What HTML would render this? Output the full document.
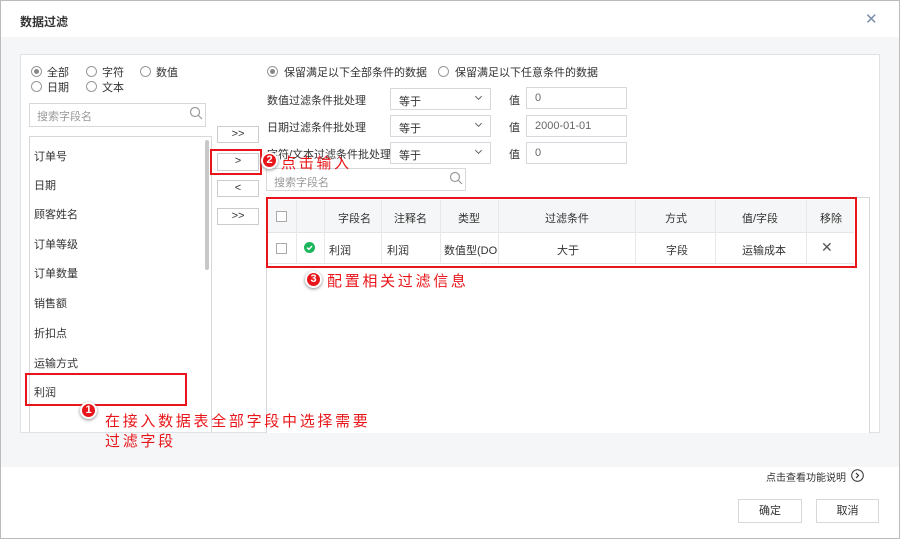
<!DOCTYPE html>
<html><head><meta charset="utf-8"><style>
*{box-sizing:border-box;margin:0;padding:0}
body{width:900px;height:539px;position:relative;overflow:hidden;background:#fff;font-family:"Liberation Sans","Noto Sans CJK SC",sans-serif;font-size:11px;color:#333}
.a{position:absolute}
.t{position:absolute;white-space:nowrap}
.radio{position:absolute;width:11px;height:11px;border:1px solid #999;border-radius:50%;background:#fff}
.radio.on::after{content:"";position:absolute;left:2px;top:2px;width:5px;height:5px;border-radius:50%;background:#888}
.box{position:absolute;border:1px solid #d6d8dc;background:#fff}
.btn{position:absolute;border:1px solid #ccc;background:#fff;text-align:center;font-size:11px;line-height:15px;color:#333}
.red{position:absolute;border:2px solid #e8161a}
.rc{position:absolute;width:17px;height:17px;border-radius:50%;background:#e8161a;border:2px solid #fff;box-shadow:0 1px 3px #888;color:#fff;font-size:11px;font-weight:bold;text-align:center;line-height:13px}
.rt{position:absolute;color:#e8161a;font-size:15px;letter-spacing:2.7px;white-space:nowrap}
.chev{position:absolute;right:9px;top:5px;width:5px;height:5px;border-right:1px solid #666;border-bottom:1px solid #666;transform:rotate(45deg)}
.cb{position:absolute;width:11px;height:11px;border:1px solid #aaa;background:#fff}
</style></head><body>
<div class="a" style="left:0;top:0;width:900px;height:539px;border:1px solid #bbb"></div>
<div class="t" style="left:20px;top:13px;font-size:12px;font-weight:bold;color:#333">数据过滤</div>
<div class="t" style="left:865px;top:10px;font-size:15px;color:#7a8ea8">✕</div>
<div class="a" style="left:1px;top:37px;width:898px;height:430px;background:#f5f6f8"></div>
<div class="a" style="left:20px;top:54px;width:860px;height:379px;background:#fff;border:1px solid #e0e2e5"></div>

<div class="radio on" style="left:31px;top:66px"></div><div class="t" style="left:47px;top:64px">全部</div>
<div class="radio" style="left:86px;top:66px"></div><div class="t" style="left:102px;top:64px">字符</div>
<div class="radio" style="left:140px;top:66px"></div><div class="t" style="left:156px;top:64px">数值</div>
<div class="radio" style="left:31px;top:81px"></div><div class="t" style="left:47px;top:79px">日期</div>
<div class="radio" style="left:86px;top:81px"></div><div class="t" style="left:102px;top:79px">文本</div>

<div class="box" style="left:29px;top:103px;width:177px;height:24px"></div>
<div class="t" style="left:37px;top:108px;color:#999">搜索字段名</div>
<svg class="a" style="left:189px;top:106px" width="14" height="14"><circle cx="6" cy="6" r="4.5" fill="none" stroke="#999" stroke-width="1.2"/><path d="M9.5 9.5L13 13" stroke="#999" stroke-width="1.2"/></svg>

<div class="box" style="left:29px;top:136px;width:183px;height:296px;border-bottom:none"></div>
<div class="a" style="left:205px;top:140px;width:4px;height:130px;background:#c8c8c8;border-radius:2px"></div>
<div class="t" style="left:34px;top:148px">订单号</div>
<div class="t" style="left:34px;top:177px">日期</div>
<div class="t" style="left:34px;top:206px">顾客姓名</div>
<div class="t" style="left:34px;top:236px">订单等级</div>
<div class="t" style="left:34px;top:265px">订单数量</div>
<div class="t" style="left:34px;top:295px">销售额</div>
<div class="t" style="left:34px;top:325px">折扣点</div>
<div class="t" style="left:34px;top:355px">运输方式</div>
<div class="t" style="left:34px;top:384px">利润</div>
<div class="red" style="left:25px;top:373px;width:162px;height:33px"></div>

<div class="btn" style="left:217px;top:126px;width:42px;height:17px">&gt;&gt;</div>
<div class="btn" style="left:217px;top:153px;width:42px;height:18px">&gt;</div>
<div class="red" style="left:210px;top:149px;width:52px;height:26px"></div>
<div class="btn" style="left:217px;top:180px;width:42px;height:17px">&lt;</div>
<div class="btn" style="left:217px;top:208px;width:42px;height:17px">&gt;&gt;</div>

<div class="radio on" style="left:267px;top:66px"></div><div class="t" style="left:284px;top:64px">保留满足以下全部条件的数据</div>
<div class="radio" style="left:438px;top:66px"></div><div class="t" style="left:455px;top:64px">保留满足以下任意条件的数据</div>

<div class="t" style="left:267px;top:92px">数值过滤条件批处理</div>
<div class="t" style="left:267px;top:119px">日期过滤条件批处理</div>
<div class="t" style="left:267px;top:146px">字符/文本过滤条件批处理</div>
<div class="box" style="left:390px;top:88px;width:101px;height:22px"><span class="t" style="left:8px;top:4px">等于</span><div class="chev"></div></div>
<div class="box" style="left:390px;top:115px;width:101px;height:22px"><span class="t" style="left:8px;top:4px">等于</span><div class="chev"></div></div>
<div class="box" style="left:390px;top:142px;width:101px;height:22px"><span class="t" style="left:8px;top:4px">等于</span><div class="chev"></div></div>
<div class="t" style="left:509px;top:92px">值</div><div class="t" style="left:509px;top:119px">值</div><div class="t" style="left:509px;top:146px">值</div>
<div class="box" style="left:526px;top:87px;width:101px;height:22px"><span class="t" style="left:8px;top:4px;color:#666">0</span></div>
<div class="box" style="left:526px;top:115px;width:101px;height:22px"><span class="t" style="left:8px;top:4px;color:#666">2000-01-01</span></div>
<div class="box" style="left:526px;top:142px;width:101px;height:22px"><span class="t" style="left:8px;top:4px;color:#666">0</span></div>

<div class="box" style="left:266px;top:168px;width:200px;height:23px"></div>
<div class="t" style="left:274px;top:174px;color:#999">搜索字段名</div>
<svg class="a" style="left:449px;top:171px" width="14" height="14"><circle cx="6" cy="6" r="4.5" fill="none" stroke="#999" stroke-width="1.2"/><path d="M9.5 9.5L13 13" stroke="#999" stroke-width="1.2"/></svg>

<div class="box" style="left:266px;top:197px;width:604px;height:236px;border-bottom:none"></div>
<div class="a" style="left:268px;top:200px;width:586px;height:33px;background:#f5f6f7;border-bottom:1px solid #e5e5e5"></div>
<div class="a" style="left:268px;top:263px;width:586px;height:1px;background:#e5e5e5"></div>
<div class="a" style="left:296px;top:200px;width:1px;height:63px;background:#e8e8e8"></div>
<div class="a" style="left:324px;top:200px;width:1px;height:63px;background:#e8e8e8"></div>
<div class="a" style="left:381px;top:200px;width:1px;height:63px;background:#e8e8e8"></div>
<div class="a" style="left:440px;top:200px;width:1px;height:63px;background:#e8e8e8"></div>
<div class="a" style="left:498px;top:200px;width:1px;height:63px;background:#e8e8e8"></div>
<div class="a" style="left:635px;top:200px;width:1px;height:63px;background:#e8e8e8"></div>
<div class="a" style="left:715px;top:200px;width:1px;height:63px;background:#e8e8e8"></div>
<div class="a" style="left:806px;top:200px;width:1px;height:63px;background:#e8e8e8"></div>
<div class="cb" style="left:276px;top:211px"></div>
<div class="t" style="left:338px;top:210px">字段名</div>
<div class="t" style="left:394px;top:210px">注释名</div>
<div class="t" style="left:458px;top:210px">类型</div>
<div class="t" style="left:545px;top:210px">过滤条件</div>
<div class="t" style="left:665px;top:210px">方式</div>
<div class="t" style="left:742px;top:210px">值/字段</div>
<div class="t" style="left:820px;top:210px">移除</div>
<div class="cb" style="left:276px;top:243px"></div>
<svg class="a" style="left:304px;top:242px" width="11" height="11"><circle cx="5.5" cy="5.5" r="5.5" fill="#1bb55c"/><path d="M3 5.6L4.9 7.4L8 4" stroke="#fff" stroke-width="1.4" fill="none"/></svg>
<div class="t" style="left:329px;top:242px">利润</div>
<div class="t" style="left:387px;top:242px">利润</div>
<div class="a" style="left:444px;top:242px;width:54px;overflow:hidden;white-space:nowrap">数值型(DOUBLE)</div>
<div class="t" style="left:557px;top:242px">大于</div>
<div class="t" style="left:666px;top:242px">字段</div>
<div class="t" style="left:742px;top:242px">运输成本</div>
<div class="t" style="left:821px;top:239px;font-size:14px;color:#555">✕</div>
<div class="red" style="left:266px;top:197px;width:591px;height:71px"></div>

<div class="rc" style="left:261px;top:152px">2</div>
<div class="rt" style="left:281px;top:152px">点击输入</div>
<div class="rc" style="left:305px;top:271px">3</div>
<div class="rt" style="left:327px;top:270px">配置相关过滤信息</div>
<div class="rc" style="left:80px;top:402px">1</div>
<div class="rt" style="left:105px;top:410px">在接入数据表全部字段中选择需要</div>
<div class="rt" style="left:105px;top:430px">过滤字段</div>

<div class="t" style="left:766px;top:469px;font-size:10px;color:#333">点击查看功能说明</div>
<svg class="a" style="left:851px;top:469px" width="13" height="13"><circle cx="6.5" cy="6.5" r="5.8" fill="none" stroke="#333" stroke-width="1"/><path d="M5 4L7.5 6.5L5 9" stroke="#333" stroke-width="1.2" fill="none"/></svg>
<div class="box" style="left:738px;top:499px;width:64px;height:24px;text-align:center;line-height:22px">确定</div>
<div class="box" style="left:816px;top:499px;width:63px;height:24px;text-align:center;line-height:22px">取消</div>
</body></html>
